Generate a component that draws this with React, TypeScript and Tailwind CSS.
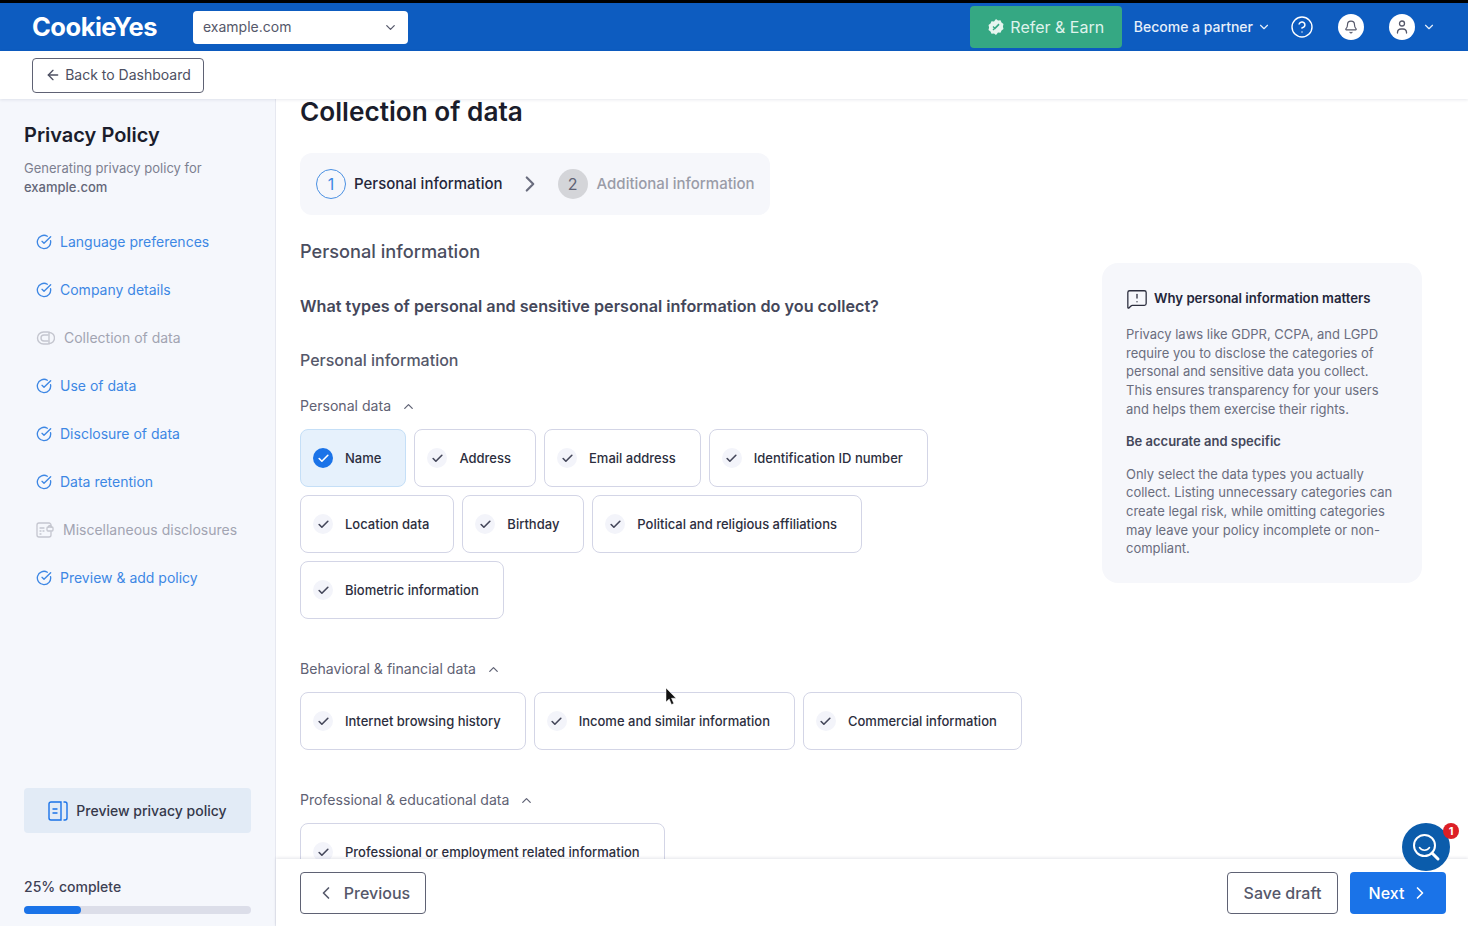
import React from 'react';
import { ArrowLeft, Bell, Check, ChevronDown, ChevronLeft, ChevronRight, ChevronUp, CircleCheckBig, CircleHelp, MessageSquareWarning } from 'lucide-react';

const navItems = [
  { label: "Language preferences", done: true },
  { label: "Company details", done: true },
  { label: "Collection of data", done: false, icon: "collection" },
  { label: "Use of data", done: true },
  { label: "Disclosure of data", done: true },
  { label: "Data retention", done: true },
  { label: "Miscellaneous disclosures", done: false, icon: "misc" },
  { label: "Preview & add policy", done: true },
];

const groups = [
  { title: "Personal data", items: ["Name", "Address", "Email address", "Identification ID number", "Location data", "Birthday", "Political and religious affiliations", "Biometric information"] },
  { title: "Behavioral & financial data", items: ["Internet browsing history", "Income and similar information", "Commercial information"] },
  { title: "Professional & educational data", items: ["Professional or employment related information"] },
];

function CollectionIcon() {
  return (
    <svg width="19" height="16" viewBox="0 0 19 16" fill="none" stroke="#c4c6cf" strokeWidth="1.4" strokeLinecap="round">
      <path d="M12 2H7.5a6 6 0 0 0 0 12H12" />
      <path d="M12 5H8a3 3 0 0 0 0 6h4" />
      <path d="M13 2.5a5.5 5.5 0 0 1 0 11" />
      <path d="M13 2v12" />
    </svg>
  );
}

function MiscIcon() {
  return (
    <svg width="18" height="16" viewBox="0 0 18 16" fill="none" stroke="#c4c6cf" strokeWidth="1.3" strokeLinecap="round">
      <path d="M15 5V3a2 2 0 0 0-2-2H3a2 2 0 0 0-2 2v10a2 2 0 0 0 2 2h10a2 2 0 0 0 2-2v-3" />
      <path d="M4 6h4M4 9h1M7 9h1M4 12h1" />
      <rect x="11" y="5" width="6" height="4" rx="1" />
      <path d="M12.5 5a1.5 1.5 0 0 1 3 0" />
    </svg>
  );
}

function PreviewIcon() {
  return (
    <svg width="20" height="20" viewBox="0 0 20 20" fill="none" stroke="#1a73e8" strokeWidth="1.4" strokeLinecap="round">
      <path d="M13 1H3a2 2 0 0 0-2 2v14a2 2 0 0 0 2 2h10z" />
      <path d="M16 1h1a2 2 0 0 1 2 2v14a2 2 0 0 1-2 2h-1" />
      <path d="M5 8h4M5 12h4" />
    </svg>
  );
}

function Chip({ label, selected }: { label: string; selected: boolean }) {
  return (
    <div className={`flex h-[58px] shrink-0 items-center gap-3 rounded-lg border pl-3 pr-6 ${selected ? "border-[#c5dff7] bg-[#e6f1fc]" : "border-[#d3d5e6] bg-white"}`}>
      <span className={`flex h-5 w-5 items-center justify-center rounded-full ${selected ? "bg-[#1a73e8]" : "bg-[#f3f4fa]"}`}>
        <Check size={13} strokeWidth={3} className={selected ? "text-white" : "text-[#44475a]"} />
      </span>
      <span className="text-[13px] font-medium leading-none text-[#2c2e3e]">{label}</span>
    </div>
  );
}

export default function App() {
  return (
    <div className="relative flex h-[926px] flex-col overflow-hidden bg-white font-['Inter',sans-serif]">
      <div className="h-[3px] shrink-0 bg-black" />

      <header className="flex h-12 shrink-0 items-center bg-[#0d5cc0] pl-8 pr-8">
        <span className="w-[161px] text-[25.500px] font-bold leading-none tracking-[-0.5px] text-white">CookieYes</span>
        <div className="flex h-[33px] w-[215px] items-center justify-between rounded bg-white pl-2.5 pr-2.5">
          <span className="text-sm text-[#55586a]">example.com</span>
          <ChevronDown size={15} className="text-[#55586a]" />
        </div>
        <div className="ml-auto flex h-[42px] w-[152px] items-center justify-center gap-[5px] rounded bg-[#35a883] text-white">
          <svg width="18" height="18" viewBox="0 0 18 18">
            <path d="M9 1l2 1.500 2.500-.2 1 2.300 2 1.400-.6 2.500.6 2.500-2 1.400-1 2.300-2.500-.2L9 17l-2-1.500-2.500.2-1-2.300-2-1.400.6-2.500-.6-2.500 2-1.400 1-2.300 2.500.2z" fill="#e6f5ef" />
            <path d="M6 12l6-6M6 8.500l2 2 4-4" stroke="#35a883" strokeWidth="1.300" fill="none" />
          </svg>
          <span className="text-base text-[#dff3ec]">Refer &amp; Earn</span>
        </div>
        <div className="ml-3 flex items-center gap-1 text-sm font-medium text-[#e6effa]">
          Become a partner
          <ChevronDown size={14} />
        </div>
        <CircleHelp size={24} strokeWidth={1.4} className="ml-[19px] text-white" />
        <span className="ml-6 flex h-[26px] w-[26px] items-center justify-center rounded-full bg-white">
          <Bell size={14} className="text-[#55586a]" />
        </span>
        <span className="ml-[25px] flex h-[26px] w-[26px] items-center justify-center rounded-full bg-white">
          <svg width="16" height="16" viewBox="0 0 16 16" fill="none" stroke="#55586a" strokeWidth="1.300" strokeLinecap="round">
            <circle cx="8" cy="4.500" r="2.500" />
            <path d="M3.500 14v-1a3.500 3.500 0 0 1 3.500-3h2a3.500 3.500 0 0 1 3.500 3v1" />
          </svg>
        </span>
        <ChevronDown size={14} className="ml-[7px] text-[#e6effa]" />
      </header>

      <div className="relative z-10 flex h-12 shrink-0 items-center bg-white pl-8 shadow-[0_1px_3px_rgba(30,40,80,0.1)]">
        <button className="flex h-[35px] w-[172px] items-center justify-center gap-1 rounded border border-[#5f6274] text-sm text-[#4d5062]">
          <ArrowLeft size={16} />
          Back to Dashboard
        </button>
      </div>

      <div className="flex min-h-0 flex-1">
        <aside className="flex w-[276px] shrink-0 flex-col border-r border-[#e6e8f0] bg-[#f5f7fc] px-6 pb-3">
          <h2 className="mt-6 text-xl font-semibold leading-6 text-[#1b1d2c]">Privacy Policy</h2>
          <p className="mt-3 text-[13px] leading-[19px] text-[#7c7f90]">
            Generating privacy policy for<br />
            <span className="font-medium text-[#636678]">example.com</span>
          </p>
          <nav className="mt-[21px] flex flex-col pl-3">
            {navItems.map((item, index) => (
              <div key={index} className={`flex h-12 items-center ${item.done ? "gap-2 text-[#3d87e4]" : "gap-[9px] text-[#a2a4b2]"}`}>
                {item.done ? <CircleCheckBig size={16} strokeWidth={2} /> : item.icon === "collection" ? <CollectionIcon /> : <MiscIcon />}
                <span className="text-sm">{item.label}</span>
              </div>
            ))}
          </nav>
          <button className="mt-auto flex h-[45px] w-full items-center justify-center gap-2 rounded bg-[#e2ebf6] text-sm font-medium text-[#35384a]">
            <PreviewIcon />
            Preview privacy policy
          </button>
          <p className="mt-11 text-sm font-medium leading-5 text-[#3e4154]">25% complete</p>
          <div className="mt-[9px] h-2 rounded-full bg-[#dcdee9]">
            <div className="h-2 w-1/4 rounded-full bg-[#1a73e8]" />
          </div>
        </aside>

        <main className="flex min-w-0 flex-1 flex-col">
          <div className="-mt-1 flex min-h-0 flex-1 overflow-hidden pl-6 pt-1">
            <div className="w-[802px] shrink-0">
              <h1 className="text-[26.200px] font-semibold leading-[26px] text-[#1a1c2b]">Collection of data</h1>
              <div className="mt-7 flex h-[62px] w-[470px] items-center rounded-xl bg-[#f6f7fb] pl-4">
                <span className="flex h-[30px] w-[30px] items-center justify-center rounded-full border border-[#4a90e2] text-base text-[#3d87e4]">1</span>
                <span className="ml-2 text-[15px] font-medium text-[#24263a]">Personal information</span>
                <ChevronRight size={26} className="ml-[14px] text-[#6a6d7e]" />
                <span className="ml-[15px] flex h-[30px] w-[30px] items-center justify-center rounded-full bg-[#d4d5d9] text-base text-[#5f6274]">2</span>
                <span className="ml-[9px] text-[15px] font-medium text-[#9a9ca8]">Additional information</span>
              </div>
              <h2 className="mt-6 text-[18.200px] font-medium leading-6 text-[#4b4e60]">Personal information</h2>
              <h3 className="mt-[31px] text-[16.200px] font-semibold leading-6 text-[#44475a]">What types of personal and sensitive personal information do you collect?</h3>
              <h3 className="mt-[30px] text-base font-medium leading-6 text-[#55586a]">Personal information</h3>
              {groups.map((group, gi) => (
                <section key={gi} className={gi === 0 ? "mt-6" : "mt-10"}>
                  <div className="flex h-5 items-center gap-2.5 text-[14.100px] text-[#5f6274]">
                    {group.title}
                    <ChevronUp size={15} />
                  </div>
                  <div className="mt-[13px] flex w-[740px] flex-wrap gap-2">
                    {group.items.map((item, i) => (
                      <Chip key={i} label={item} selected={item === "Name"} />
                    ))}
                  </div>
                </section>
              ))}
            </div>
            <div className="mt-[164px] self-start">
              <aside className="w-[320px] rounded-2xl bg-[#f6f7fb] px-6 pb-[25px] pt-[25px]">
                <div className="flex items-center gap-[6px]">
                  <MessageSquareWarning size={22} strokeWidth={1.4} className="text-[#2c2e3e]" />
                  <h4 className="text-[13.200px] font-semibold text-[#24263a]">Why personal information matters</h4>
                </div>
                <p className="mt-[15px] text-[13px] leading-[18.700px] text-[#6a6d7e]">
                  Privacy laws like GDPR, CCPA, and LGPD require you to disclose the categories of personal and sensitive data you collect. This ensures transparency for your users and helps them exercise their rights.
                </p>
                <h4 className="mt-[13px] text-[13px] font-semibold leading-[18px] text-[#44475a]">Be accurate and specific</h4>
                <p className="mt-[15px] text-[13px] leading-[18.700px] text-[#6a6d7e]">
                  Only select the data types you actually collect. Listing unnecessary categories can create legal risk, while omitting categories may leave your policy incomplete or non-compliant.
                </p>
              </aside>
            </div>
          </div>

          <footer className="relative flex h-[67px] shrink-0 items-center justify-between bg-white pl-6 pr-[22px] shadow-[0_-1px_3px_rgba(30,40,80,0.12)]">
            <button className="flex h-[42px] w-[126px] items-center justify-center gap-2 rounded border border-[#5f6274] text-base font-medium text-[#55586a]">
              <ChevronLeft size={20} />
              Previous
            </button>
            <div className="flex items-center gap-3">
              <button className="h-[42px] w-[111px] rounded border border-[#5f6274] text-base font-medium text-[#55586a]">Save draft</button>
              <button className="flex h-[42px] w-[96px] items-center justify-center gap-1.5 rounded bg-[#1a73e8] pl-[3px] text-base font-medium text-white">
                Next
                <ChevronRight size={20} />
              </button>
            </div>
          </footer>
        </main>
      </div>

      {/* chat launcher */}
      <div className="absolute left-[1402px] top-[823px] z-20 flex h-12 w-12 items-center justify-center rounded-full bg-[#0b5cab]">
        <svg width="30" height="30" viewBox="0 0 30 30" fill="none" stroke="white" strokeLinecap="round">
          <circle cx="13.500" cy="13.500" r="10.500" strokeWidth="2" />
          <path d="M8.500 15.500a6 6 0 0 0 10 0" strokeWidth="1.500" />
          <path d="M21 21l6 6" strokeWidth="3" />
        </svg>
      </div>
      <span className="absolute left-[1443px] top-[823px] z-30 flex h-4 w-4 items-center justify-center rounded-full bg-[#dc1f26] text-[11px] font-bold text-white">1</span>

      {/* mouse pointer */}
      <svg className="absolute left-[665px] top-[688px] z-30" width="11" height="18" viewBox="0 0 11 18">
        <path d="M1 0v14l3.200-3 2.300 5.500 2.300-1-2.300-5.300H11z" fill="#111" stroke="#fff" strokeWidth="0.500" />
      </svg>
    </div>
  );
}
